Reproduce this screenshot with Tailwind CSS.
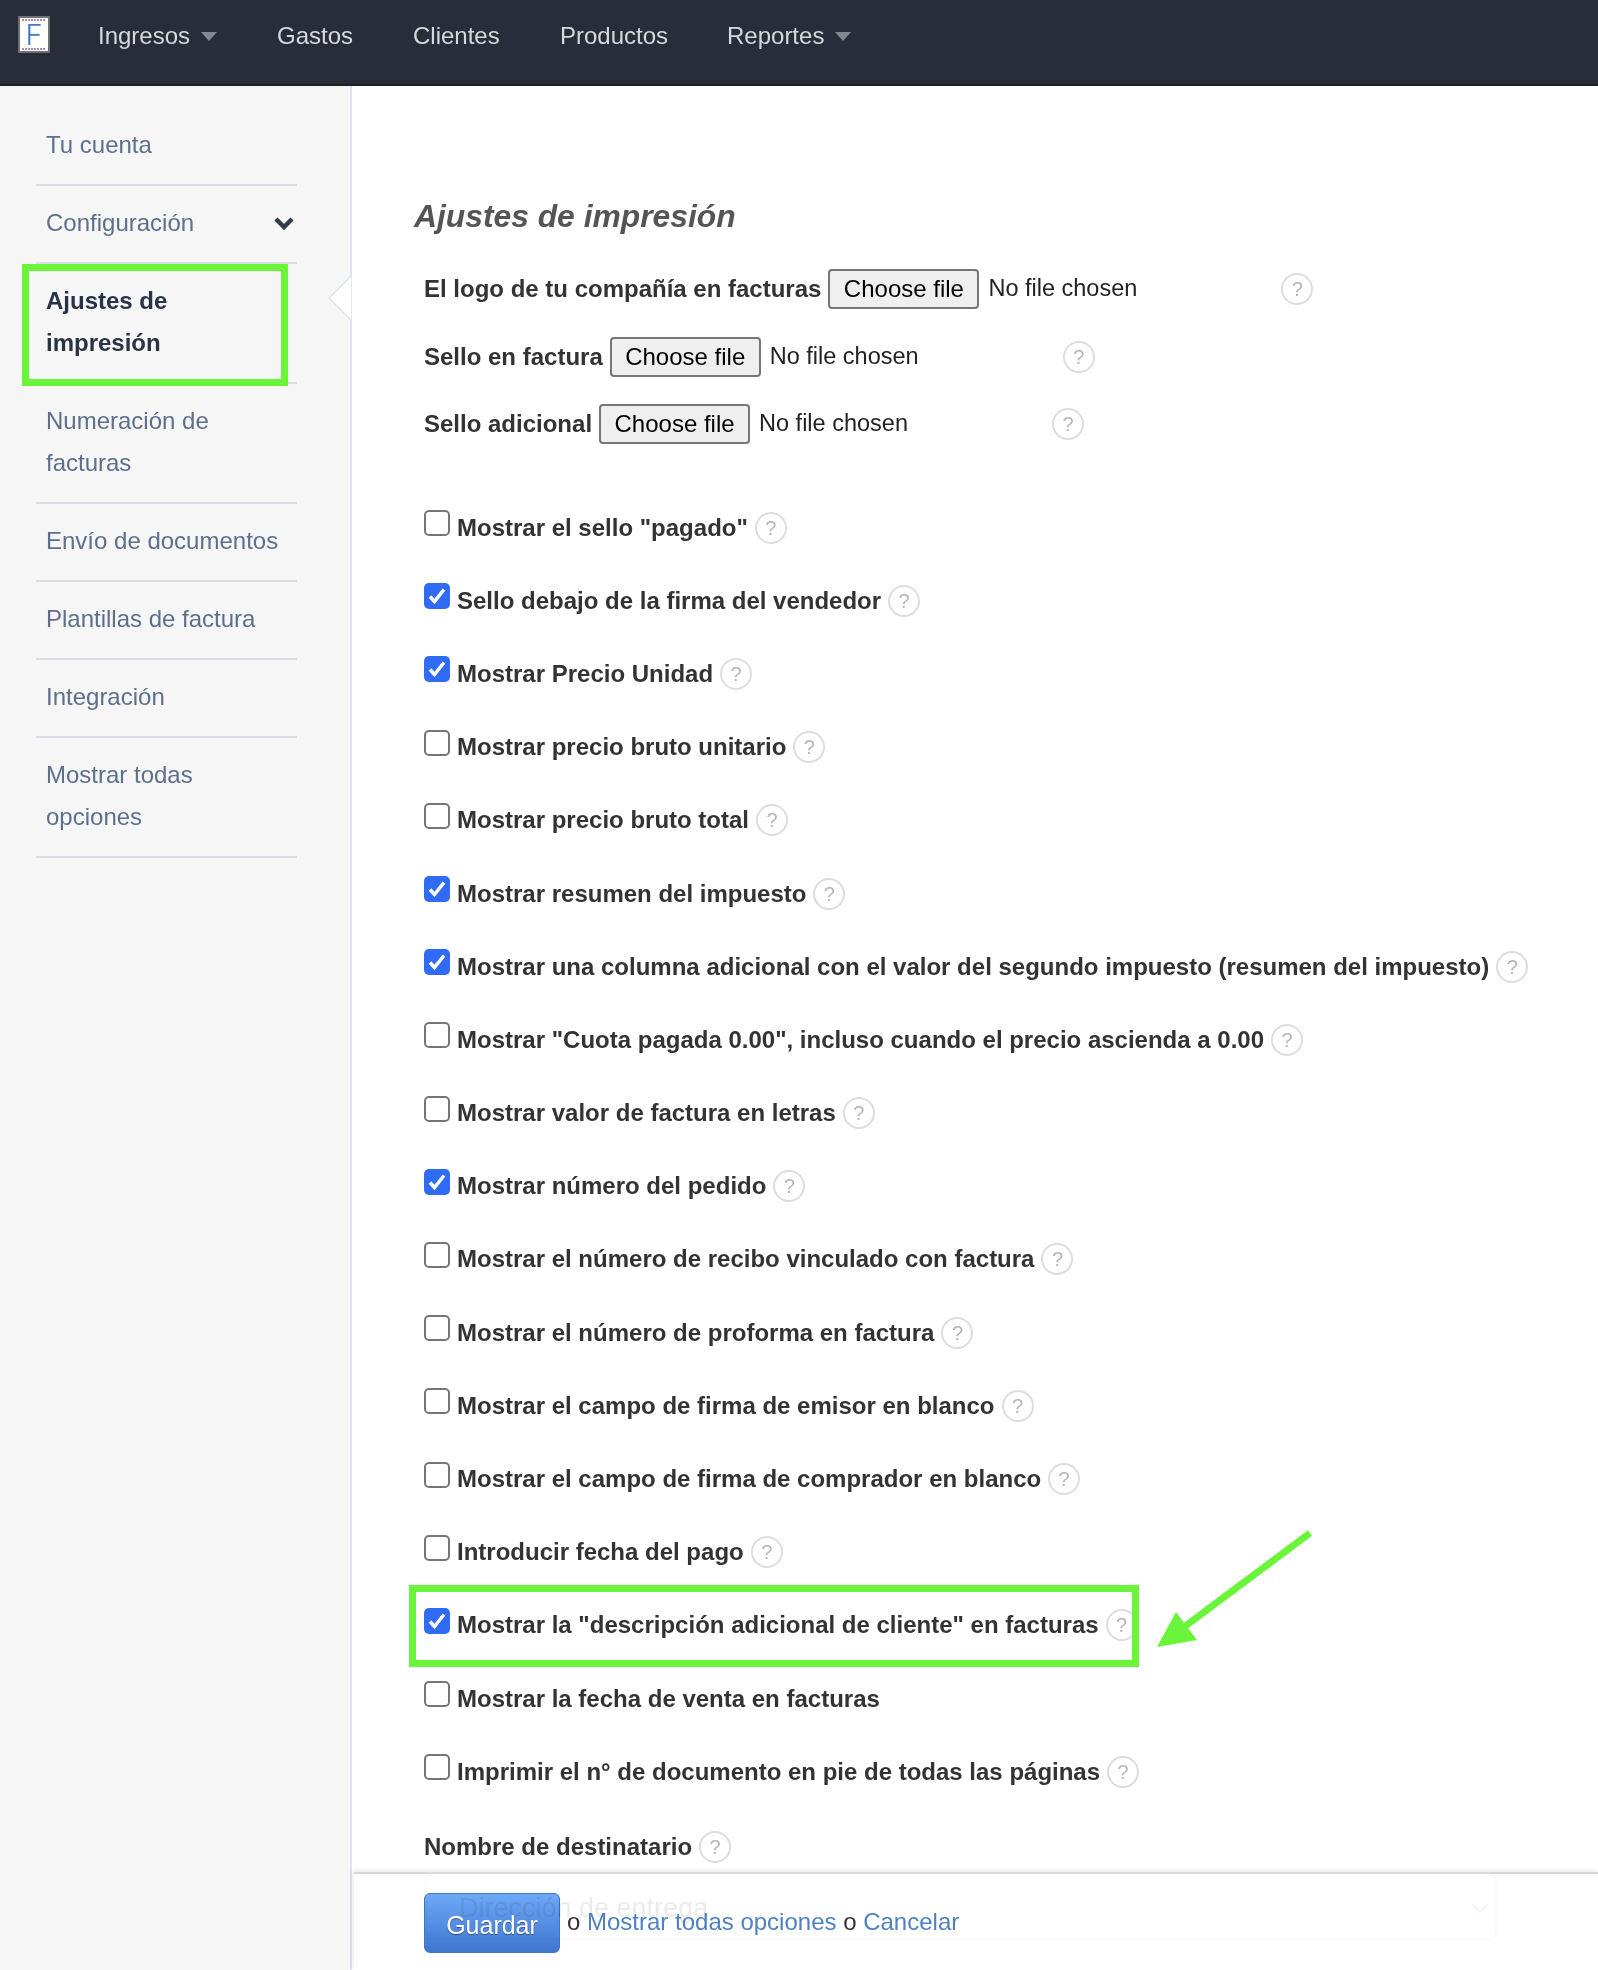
<!DOCTYPE html>
<html lang="es">
<head>
  <meta charset="UTF-8">
  <title>Ajustes de impresión</title>
  <script src="https://cdn.jsdelivr.net/npm/@tailwindcss/browser@4"></script>
</head>
<body class="bg-white font-['Liberation_Sans',Arial,sans-serif]">
<div class="relative h-[1970px] overflow-hidden">
  <!-- Top nav -->
  <header class="flex h-[86px] items-start border-b-2 border-[#1c2027] bg-[#282e39] text-[24px] leading-[72px] text-[#d6d8db]">
    <div class="relative ml-[18px] mt-[16px] flex h-[37px] w-[32px] items-center justify-center border-2 border-[#6d7076] bg-white">
      <svg class="absolute left-[1px] top-[1px]" width="26" height="31" viewBox="0 0 26 31">
        <line x1="1" y1="1" x2="25" y2="1" stroke="#d9534f" stroke-width="1.5" stroke-dasharray="2 4"/>
        <line x1="4" y1="1" x2="25" y2="1" stroke="#4a80c8" stroke-width="1.5" stroke-dasharray="2 4"/>
        <line x1="1" y1="30" x2="25" y2="30" stroke="#d9534f" stroke-width="1.5" stroke-dasharray="2 4"/>
        <line x1="4" y1="30" x2="25" y2="30" stroke="#4a80c8" stroke-width="1.5" stroke-dasharray="2 4"/>
      </svg>
      <span class="text-[29px] font-['Inter',sans-serif] font-light leading-none text-[#3f78c4]">F</span>
    </div>
    <nav class="ml-[48px] flex">
      <a class="flex w-[179px] items-center">Ingresos
        <svg class="ml-[11px] mt-[1px]" width="16" height="9" viewBox="0 0 16 9"><path d="M0 0h16L8 9z" fill="#85888e"/></svg>
      </a>
      <a class="w-[136px]">Gastos</a>
      <a class="w-[147px]">Clientes</a>
      <a class="w-[167px]">Productos</a>
      <a class="flex items-center">Reportes
        <svg class="ml-[11px] mt-[1px]" width="16" height="9" viewBox="0 0 16 9"><path d="M0 0h16L8 9z" fill="#85888e"/></svg>
      </a>
    </nav>
  </header>

  <div class="flex">
    <!-- Sidebar -->
    <aside class="relative h-[1884px] w-[352px] shrink-0 border-r-2 border-[#dde3ea] bg-[#f6f6f7] pl-[36px] pt-[22px] text-[24px] leading-[42px] text-[#5d6f8b]">
      <ul class="w-[261px]">
        <li class="border-b-2 border-[#d8dde6] px-[10px] pb-[18px] pt-[16px]">Tu cuenta</li>
        <li class="flex items-center justify-between border-b-2 border-[#d8dde6] pb-[18px] pl-[10px] pr-[3px] pt-[16px]">Configuración
          <svg width="20" height="14" viewBox="0 0 20 14"><path d="M2 3l8 8 8-8" fill="none" stroke="#333c4c" stroke-width="4.5"/></svg>
        </li>
        <li class="border-b-2 border-[#d8dde6] px-[10px] pb-[18px] pt-[16px] font-bold text-[#2a3346]">Ajustes de impresión</li>
        <li class="border-b-2 border-[#d8dde6] px-[10px] pb-[18px] pt-[16px]">Numeración de facturas</li>
        <li class="border-b-2 border-[#d8dde6] px-[10px] pb-[18px] pt-[16px] whitespace-nowrap">Envío de documentos</li>
        <li class="border-b-2 border-[#d8dde6] px-[10px] pb-[18px] pt-[16px] whitespace-nowrap">Plantillas de factura</li>
        <li class="border-b-2 border-[#d8dde6] px-[10px] pb-[18px] pt-[16px]">Integración</li>
        <li class="border-b-2 border-[#d8dde6] px-[10px] pb-[18px] pt-[16px]">Mostrar todas opciones</li>
      </ul>
      <svg class="absolute right-[-2px] top-[188px]" width="24" height="48" viewBox="0 0 24 48"><path d="M24 1L1 24l23 23z" fill="#fff" stroke="#dde3ea" stroke-width="1.5"/></svg>
    </aside>

    <!-- Settings form -->
    <main class="flex-1 pl-[72px] text-[24px] font-bold text-[#333]">
      <h1 class="-ml-[10px] mt-[106px] text-[31.8px] italic leading-[48px] text-[#555]">Ajustes de impresión</h1>

      <div id="fileRows" class="mt-[15px]">
        <div class="flex h-[68px] items-center whitespace-nowrap">
          <span>El logo de tu compañía en facturas</span>
          <span class="ml-[7px] flex h-[40px] w-[151px] items-center justify-center rounded-[4px] border-2 border-[#767676] bg-[#efefef] font-normal text-black">Choose file</span>
          <span class="ml-[9px] w-[293px] text-[23.5px] font-normal text-[#222]">No file chosen</span>
          <span class="flex size-[32px] items-center justify-center rounded-full border-2 border-[#ddd] text-[20px] font-normal text-[#b5b5b5]">?</span>
        </div>
        <div class="flex h-[67px] items-center whitespace-nowrap">
          <span>Sello en factura</span>
          <span class="ml-[7px] flex h-[40px] w-[151px] items-center justify-center rounded-[4px] border-2 border-[#767676] bg-[#efefef] font-normal text-black">Choose file</span>
          <span class="ml-[9px] w-[293px] text-[23.5px] font-normal text-[#222]">No file chosen</span>
          <span class="flex size-[32px] items-center justify-center rounded-full border-2 border-[#ddd] text-[20px] font-normal text-[#b5b5b5]">?</span>
        </div>
        <div class="flex h-[68px] items-center whitespace-nowrap">
          <span>Sello adicional</span>
          <span class="ml-[7px] flex h-[40px] w-[151px] items-center justify-center rounded-[4px] border-2 border-[#767676] bg-[#efefef] font-normal text-black">Choose file</span>
          <span class="ml-[9px] w-[293px] text-[23.5px] font-normal text-[#222]">No file chosen</span>
          <span class="flex size-[32px] items-center justify-center rounded-full border-2 border-[#ddd] text-[20px] font-normal text-[#b5b5b5]">?</span>
        </div>
      </div>

      <div id="checkRows" class="mt-[33px]"></div>

      <div class="mt-[2px] flex h-[73px] items-center whitespace-nowrap">
        <span>Nombre de destinatario</span>
        <span class="ml-[7px] flex size-[32px] items-center justify-center rounded-full border-2 border-[#ddd] text-[20px] font-normal text-[#b5b5b5]">?</span>
      </div>
      <div class="-mt-[10px] ml-[1px] flex h-[67px] w-[1072px] items-center justify-between rounded-[8px] border-2 border-[#ccc] pl-[32px] pr-[6px] pt-[3px] text-[27px] font-normal text-[#333]">Dirección de entrega
        <svg width="18" height="11" viewBox="0 0 18 11"><path d="M1 1l8 8 8-8" fill="none" stroke="#888" stroke-width="2"/></svg>
      </div>
    </main>
  </div>

  <!-- Sticky save bar -->
  <div class="absolute bottom-0 left-[354px] right-0 flex h-[98px] items-start border-t-2 border-[#d9d9d9] bg-white/90 pl-[70px] pt-[19px] text-[24px] text-[#333] shadow-[-2px_-2px_4px_rgba(0,0,0,0.08)]">
    <button class="h-[60px] w-[136px] rounded-[6px] border border-[#3f74c6] bg-gradient-to-b from-[#6ea8f7] to-[#3f76cf] pt-[6px] text-[25px] text-white mix-blend-multiply [text-shadow:0_1px_1px_rgba(0,0,0,0.4)]">Guardar</button>
    <span class="ml-[7px] mt-[11px] leading-[36px]">o <a class="text-[#4f80c0]">Mostrar todas opciones</a> o <a class="text-[#4f80c0]">Cancelar</a></span>
  </div>

  <!-- Green annotations from the screenshot -->
  <div class="absolute left-[22px] top-[264px] h-[122px] w-[266px] border-[7px] border-[#6af53a]"></div>
  <div class="absolute left-[409px] top-[1585px] h-[82px] w-[730px] border-[7px] border-[#6af53a]"></div>
  <svg class="absolute left-[1150px] top-[1525px]" width="170" height="130" viewBox="1150 1525 170 130">
    <path d="M1310 1533L1184 1627" stroke="#6af53a" stroke-width="7" fill="none"/>
    <path d="M1157 1647L1176 1612L1197 1640z" fill="#6af53a"/>
  </svg>
</div>

<script>
  // label, checked, has help icon
  const options = [
    ['Mostrar el sello "pagado"', false, true],
    ['Sello debajo de la firma del vendedor', true, true],
    ['Mostrar Precio Unidad', true, true],
    ['Mostrar precio bruto unitario', false, true],
    ['Mostrar precio bruto total', false, true],
    ['Mostrar resumen del impuesto', true, true],
    ['Mostrar una columna adicional con el valor del segundo impuesto (resumen del impuesto)', true, true],
    ['Mostrar "Cuota pagada 0.00", incluso cuando el precio ascienda a 0.00', false, true],
    ['Mostrar valor de factura en letras', false, true],
    ['Mostrar número del pedido', true, true],
    ['Mostrar el número de recibo vinculado con factura', false, true],
    ['Mostrar el número de proforma en factura', false, true],
    ['Mostrar el campo de firma de emisor en blanco', false, true],
    ['Mostrar el campo de firma de comprador en blanco', false, true],
    ['Introducir fecha del pago', false, true],
    ['Mostrar la "descripción adicional de cliente" en facturas', true, true],
    ['Mostrar la fecha de venta en facturas', false, false],
    ['Imprimir el n° de documento en pie de todas las páginas', false, true]
  ];
  const unchecked = '<span class="-mt-[9px] mr-[7px] size-[26px] shrink-0 rounded-[5px] border-2 border-[#767676] bg-white"></span>';
  const checked = '<span class="-mt-[9px] mr-[7px] flex size-[26px] shrink-0 items-center justify-center rounded-[5px] bg-[#2f6bf5]"><svg width="20" height="20" viewBox="0 0 20 20"><path d="M3 10.5l4.5 5L17 3.5" fill="none" stroke="#fff" stroke-width="3.5"/></svg></span>';
  const help = '<span class="ml-[7px] flex size-[32px] shrink-0 items-center justify-center rounded-full border-2 border-[#ddd] text-[20px] font-normal text-[#b5b5b5]">?</span>';
  document.getElementById('checkRows').innerHTML = options.map(([label, on, hasHelp]) =>
    `<div class="flex h-[73.2px] items-center whitespace-nowrap">${on ? checked : unchecked}<span>${label}</span>${hasHelp ? help : ''}</div>`
  ).join('');
</script>
</body>
</html>
